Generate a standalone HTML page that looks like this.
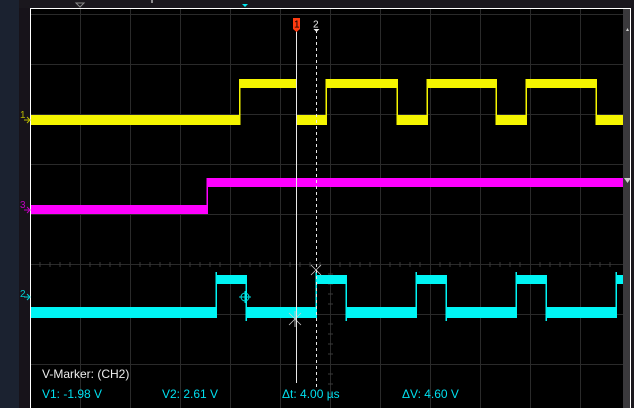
<!DOCTYPE html>
<html><head><meta charset="utf-8"><style>
html,body{margin:0;padding:0;background:#000;width:634px;height:408px;overflow:hidden}
svg{display:block}
text{font-family:"Liberation Sans",sans-serif}
</style></head><body>
<svg width="634" height="408" viewBox="0 0 634 408" xmlns="http://www.w3.org/2000/svg">
<rect x="0" y="0" width="634" height="408" fill="#000"/>
<rect x="0" y="0" width="19" height="408" fill="#1b2230"/>
<rect x="19" y="0" width="11" height="408" fill="#17131a"/>
<rect x="19" y="0" width="615" height="8" fill="#1a171d"/>
<rect x="630" y="8" width="4" height="400" fill="#1a171d"/>
<!-- top markers -->
<polygon points="76,3 84,3 80,7" fill="none" stroke="#888" stroke-width="1"/>
<line x1="152" y1="0" x2="152" y2="3" stroke="#fff"/>
<polygon points="242,4 248,4 245,7" fill="#00e5ee"/>
<!-- grid -->
<g stroke="#2a2a2a" stroke-width="1">
<line x1="80.5" y1="8" x2="80.5" y2="408"/><line x1="130.5" y1="8" x2="130.5" y2="408"/>
<line x1="180.5" y1="8" x2="180.5" y2="408"/><line x1="230.5" y1="8" x2="230.5" y2="408"/>
<line x1="280.5" y1="8" x2="280.5" y2="408"/><line x1="330.5" y1="8" x2="330.5" y2="408"/>
<line x1="380.5" y1="8" x2="380.5" y2="408"/><line x1="430.5" y1="8" x2="430.5" y2="408"/>
<line x1="480.5" y1="8" x2="480.5" y2="408"/><line x1="530.5" y1="8" x2="530.5" y2="408"/>
<line x1="580.5" y1="8" x2="580.5" y2="408"/>
<line x1="30" y1="14.5" x2="623" y2="14.5"/><line x1="30" y1="64.5" x2="623" y2="64.5"/>
<line x1="30" y1="114.5" x2="623" y2="114.5"/><line x1="30" y1="164.5" x2="623" y2="164.5"/>
<line x1="30" y1="214.5" x2="623" y2="214.5"/><line x1="30" y1="264.5" x2="623" y2="264.5"/>
<line x1="30" y1="314.5" x2="623" y2="314.5"/><line x1="30" y1="364.5" x2="623" y2="364.5"/>
</g>
<!-- center ticks -->
<g stroke="#3a3a3a">
<path d="M40 262v5M50 262v5M60 262v5M70 262v5M90 262v5M100 262v5M110 262v5M120 262v5M140 262v5M150 262v5M160 262v5M170 262v5M190 262v5M200 262v5M210 262v5M220 262v5M240 262v5M250 262v5M260 262v5M270 262v5M290 262v5M300 262v5M310 262v5M320 262v5M340 262v5M350 262v5M360 262v5M370 262v5M390 262v5M400 262v5M410 262v5M420 262v5M440 262v5M450 262v5M460 262v5M470 262v5M490 262v5M500 262v5M510 262v5M520 262v5M540 262v5M550 262v5M560 262v5M570 262v5M590 262v5M600 262v5M610 262v5"/>
<path d="M328 274h5M328 284h5M328 294h5M328 304h5M328 324h5M328 334h5M328 344h5M328 354h5M328 374h5M328 384h5M328 394h5"/>
</g>
<!-- scrollbar -->
<rect x="623" y="8" width="7" height="400" fill="#3a393c"/>
<polygon points="626,31 629,31 627.5,28" fill="#ccc"/>
<polygon points="624,178 631,178 627.5,183" fill="#ccc"/>
<!-- border -->
<line x1="30.5" y1="8" x2="30.5" y2="408" stroke="#fff"/>
<line x1="30" y1="8.5" x2="630" y2="8.5" stroke="#fff"/>
<line x1="630.5" y1="8" x2="630.5" y2="408" stroke="#fff"/>
<!-- yellow -->
<g fill="#f5f500">
<rect x="31" y="115" width="208" height="10"/>
<rect x="239" y="79" width="57" height="9"/>
<rect x="296" y="115" width="30" height="10"/>
<rect x="326" y="79" width="71" height="9"/>
<rect x="397" y="115" width="30" height="10"/>
<rect x="427" y="79" width="69" height="9"/>
<rect x="496" y="115" width="30" height="10"/>
<rect x="526" y="79" width="70" height="9"/>
<rect x="596" y="115" width="27" height="10"/>
<rect x="239" y="79" width="1.5" height="46"/><rect x="325.5" y="79" width="1.5" height="46"/>
<rect x="396.5" y="79" width="1.5" height="46"/><rect x="426.5" y="79" width="1.5" height="46"/>
<rect x="495.5" y="79" width="1.5" height="46"/><rect x="525.5" y="79" width="1.5" height="46"/>
<rect x="595.5" y="79" width="1.5" height="46"/>
</g>
<!-- magenta -->
<g fill="#ff00ff">
<rect x="31" y="205" width="176" height="9"/>
<rect x="207" y="178" width="416" height="9"/>
<rect x="206.5" y="178" width="1.5" height="36"/>
</g>
<!-- cyan -->
<g fill="#00f5f5">
<rect x="31" y="307" width="185" height="11"/>
<rect x="216" y="275" width="30" height="9"/>
<rect x="246" y="307" width="70" height="11"/>
<rect x="316" y="275" width="30" height="9"/>
<rect x="346" y="307" width="70" height="11"/>
<rect x="416" y="275" width="30" height="9"/>
<rect x="446" y="307" width="70" height="11"/>
<rect x="516" y="275" width="30" height="9"/>
<rect x="546" y="307" width="70" height="11"/>
<rect x="616" y="275" width="7" height="9"/>
<rect x="215.5" y="272" width="1.5" height="46"/><rect x="245.5" y="275" width="1.5" height="46"/>
<rect x="315.5" y="272" width="1.5" height="46"/><rect x="345.5" y="275" width="1.5" height="46"/>
<rect x="415.5" y="272" width="1.5" height="46"/><rect x="445.5" y="275" width="1.5" height="46"/>
<rect x="515.5" y="272" width="1.5" height="46"/><rect x="545.5" y="275" width="1.5" height="46"/>
<rect x="615.5" y="272" width="1.5" height="46"/>
</g>
<!-- channel labels -->
<text x="20" y="118" font-size="10" fill="#b8b800">1</text>
<path d="M24 120h6M27 117l3 3-3 3" stroke="#b8b800" fill="none"/>
<text x="20" y="208" font-size="10" fill="#c000c0">3</text>
<path d="M24 210h6M27 207l3 3-3 3" stroke="#c000c0" fill="none"/>
<text x="20" y="297" font-size="10" fill="#00d0d0">2</text>
<path d="M24 297h6M27 294l3 3-3 3" stroke="#00d0d0" fill="none"/>
<!-- cursor symbols -->
<g stroke="#00e0e0" fill="none"><circle cx="245" cy="297" r="4"/><path d="M239 297h12M245 291v12"/></g>
<g stroke="#ccc" stroke-width="0.8"><path d="M289 313l12 12M301 313l-12 12M295 311v16"/></g>
<g stroke="#ccc" stroke-width="0.8"><path d="M311 265l10 10M321 265l-10 10"/></g>
<!-- time markers -->
<line x1="296.5" y1="30" x2="296.5" y2="383" stroke="#e8e8e8"/>
<line x1="316.5" y1="30" x2="316.5" y2="390" stroke="#e8e8e8" stroke-dasharray="3,3"/>
<rect x="293" y="18" width="7" height="11" fill="#ff3b10"/>
<polygon points="293,29 300,29 296.5,32" fill="#ff3b10"/>
<text x="294" y="27.5" font-size="10" fill="#000">1</text>
<text x="313" y="27.5" font-size="10" fill="#eee">2</text>
<polygon points="313.5,29 319.5,29 316.5,32" fill="#eee"/>
<!-- readouts -->
<text x="42" y="378" font-size="12" fill="#eee">V-Marker: (CH2)</text>
<g font-size="12" fill="#00e0f0">
<text x="42" y="398">V1: -1.98 V</text>
<text x="162" y="398">V2: 2.61 V</text>
<text x="282" y="398">Δt: 4.00 µs</text>
<text x="402" y="398">ΔV: 4.60 V</text>
</g>
</svg>
</body></html>
